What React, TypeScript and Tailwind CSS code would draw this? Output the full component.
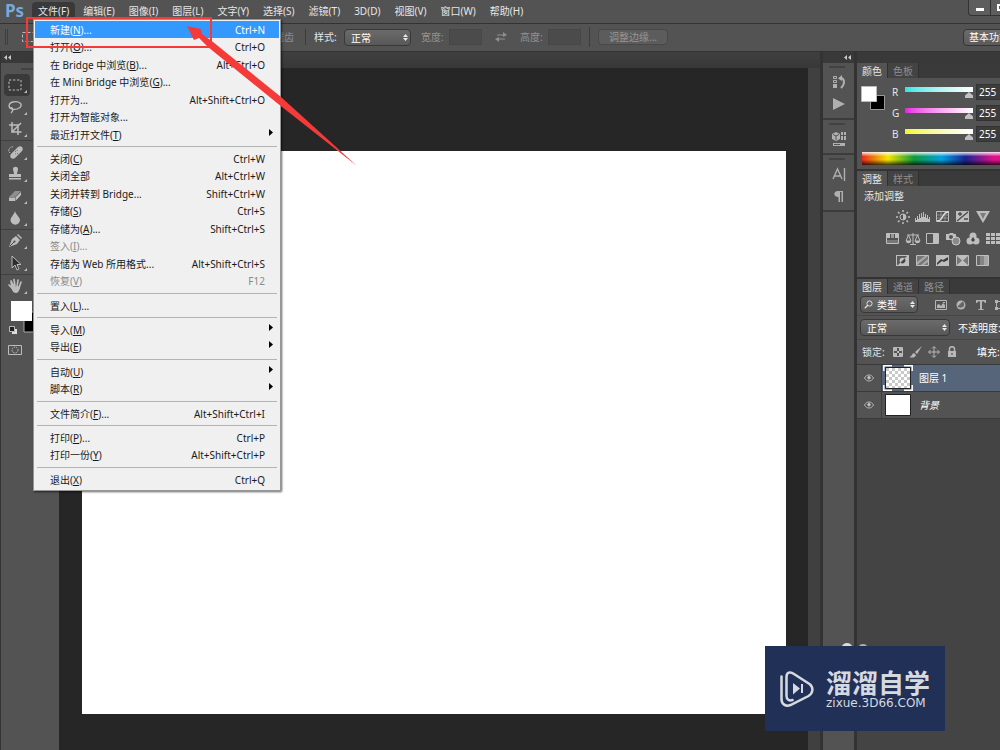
import React, { useState } from "react";

type MenuItem = {
  label: string;
  hotkey?: string;
  tail?: string;
  shortcut?: string;
  disabled?: boolean;
  submenu?: boolean;
};

const MENUS: [string, string][] = [
  ["文件", "F"],
  ["编辑", "E"],
  ["图像", "I"],
  ["图层", "L"],
  ["文字", "Y"],
  ["选择", "S"],
  ["滤镜", "T"],
  ["3D", "D"],
  ["视图", "V"],
  ["窗口", "W"],
  ["帮助", "H"],
];

const FILE_MENU: MenuItem[][] = [
  [
    { label: "新建", hotkey: "N", tail: "...", shortcut: "Ctrl+N" },
    { label: "打开", hotkey: "O", tail: "...", shortcut: "Ctrl+O" },
    { label: "在 Bridge 中浏览", hotkey: "B", tail: "...", shortcut: "Alt+Ctrl+O" },
    { label: "在 Mini Bridge 中浏览", hotkey: "G", tail: "..." },
    { label: "打开为...", shortcut: "Alt+Shift+Ctrl+O" },
    { label: "打开为智能对象..." },
    { label: "最近打开文件", hotkey: "T", submenu: true },
  ],
  [
    { label: "关闭", hotkey: "C", shortcut: "Ctrl+W" },
    { label: "关闭全部", shortcut: "Alt+Ctrl+W" },
    { label: "关闭并转到 Bridge...", shortcut: "Shift+Ctrl+W" },
    { label: "存储", hotkey: "S", shortcut: "Ctrl+S" },
    { label: "存储为", hotkey: "A", tail: "...", shortcut: "Shift+Ctrl+S" },
    { label: "签入", hotkey: "I", tail: "...", disabled: true },
    { label: "存储为 Web 所用格式...", shortcut: "Alt+Shift+Ctrl+S" },
    { label: "恢复", hotkey: "V", shortcut: "F12", disabled: true },
  ],
  [{ label: "置入", hotkey: "L", tail: "..." }],
  [
    { label: "导入", hotkey: "M", submenu: true },
    { label: "导出", hotkey: "E", submenu: true },
  ],
  [
    { label: "自动", hotkey: "U", submenu: true },
    { label: "脚本", hotkey: "R", submenu: true },
  ],
  [{ label: "文件简介", hotkey: "F", tail: "...", shortcut: "Alt+Shift+Ctrl+I" }],
  [
    { label: "打印", hotkey: "P", tail: "...", shortcut: "Ctrl+P" },
    { label: "打印一份", hotkey: "Y", shortcut: "Alt+Shift+Ctrl+P" },
  ],
  [{ label: "退出", hotkey: "X", shortcut: "Ctrl+Q" }],
];

export default function App() {
  return (
    <div className="relative flex h-screen flex-col overflow-hidden bg-[#535353] font-['Noto_Sans','Noto_Sans_CJK_SC',sans-serif] text-[10px] leading-4 text-[#e6e6e6]">
      <MenuBar />
      <OptionsBar />
      <div className="flex min-h-0 flex-1">
        <Toolbox />
        <Workspace />
        <IconDock />
        <Panels />
      </div>
      <FileMenu />
      <Annotation />
      <Watermark />
    </div>
  );
}

function MenuBar() {
  return (
    <header className="flex h-6 shrink-0 items-center border-b border-[#333] bg-[#535353] pb-px">
      <span className="w-8 pl-[5px] text-[17px] font-bold text-[#7aa9d6]">Ps</span>
      <nav className="flex flex-1 gap-0.5">
        {MENUS.map(([name, key], i) => (
          <button
            key={key}
            type="button"
            className={`h-[18px] rounded-sm px-1.5 whitespace-nowrap ${i === 0 ? "bg-[#393939]" : ""}`}
          >
            {name}({key})
          </button>
        ))}
      </nav>
      <div className="w-8 self-start overflow-hidden">
        <div className="flex w-24">
          <button
            type="button"
            aria-label="最小化"
            className="flex h-4 w-[23px] items-end justify-center rounded-bl border border-t-0 border-[#333] bg-[#5e5e5e] pb-1"
          >
            <span className="h-[3px] w-2 bg-white" />
          </button>
          <button
            type="button"
            aria-label="最大化"
            className="flex h-4 w-[23px] items-center border border-t-0 border-l-0 border-[#333] bg-[#5e5e5e] pl-1.5"
          >
            <span className="h-[7px] w-2 border-2 border-white" />
          </button>
        </div>
      </div>
    </header>
  );
}

function OptionsBar() {
  return (
    <div className="flex h-7 shrink-0 items-center border-b border-[#333] bg-[#535353] pb-px">
      <div className="flex w-[306px] items-center justify-between border-r border-[#3c3c3c] pr-[11px] pl-[5px]">
        <span className="flex items-center gap-3">
          <span className="h-4 w-[3px] border-x border-[#3e3e3e]" />
          <svg width="16" height="14" fill="none" stroke="#bbb" strokeDasharray="3 2">
            <rect x="2.5" y="2.5" width="11" height="9" />
          </svg>
        </span>
        <label className="flex items-center gap-1 text-[#8b8b8b]">
          <input type="checkbox" disabled className="h-2.5 w-2.5" />
          消除锯齿
        </label>
      </div>
      <label className="flex items-center gap-1.5 pl-2">
        <span className="w-6 whitespace-nowrap">样式:</span>
        <Select value="正常" options={["正常", "固定比例", "固定大小"]} className="w-[67px]" />
      </label>
      <label className="flex items-center gap-1 pl-2.5 text-[#929292]">
        <span className="w-6">宽度:</span>
        <input disabled className="h-4 w-[33px] border border-[#474747] bg-[#4b4b4b]" />
      </label>
      <button type="button" disabled aria-label="高度和宽度互换" className="mx-3 text-[#8f8f8f]">
        <svg width="14" height="12" fill="currentColor">
          <path d="M3 3.500h6V1l4 3-4 2V4.500H3zM11 8.500H5V11L1 8l4-2v1.500h6z" />
        </svg>
      </button>
      <label className="flex items-center gap-1 text-[#929292]">
        <span className="w-6">高度:</span>
        <input disabled className="h-4 w-[33px] border border-[#474747] bg-[#4b4b4b]" />
      </label>
      <span className="mx-2 h-5 w-px bg-[#3c3c3c]" />
      <button
        type="button"
        disabled
        className="h-4 w-[70px] rounded-sm border border-[#484848] bg-[#5c5c5c] leading-3 text-[#959595]"
      >
        调整边缘...
      </button>
      <div className="ml-auto w-[37px] overflow-hidden">
        <button
          type="button"
          className="h-[17px] w-20 rounded-sm border border-[#353535] bg-linear-to-b from-[#6c6c6c] to-[#5a5a5a] pl-[5px] text-left leading-3 text-white"
        >
          基本功能
        </button>
      </div>
    </div>
  );
}

function Select({
  value,
  options,
  className,
  label,
  search,
}: {
  value: string;
  options: string[];
  className: string;
  label?: string;
  search?: boolean;
}) {
  return (
    <span className={`relative shrink-0 ${className}`}>
      <select
        defaultValue={value}
        aria-label={label}
        className={`block h-[17px] w-full appearance-none rounded-sm border border-[#383838] bg-linear-to-b from-[#6b6b6b] to-[#585858] text-white ${search ? "pl-4" : "pl-1.5"}`}
      >
        {options.map((o) => (
          <option key={o}>{o}</option>
        ))}
      </select>
      <svg
        width="5"
        height="7"
        fill="#e8e8e8"
        className="pointer-events-none absolute top-[5px] right-[3px]"
      >
        <path d="M0 3 2.5 0 5 3zM0 4h5L2.5 7z" />
      </svg>
      {search ? (
        <svg
          width="9"
          height="9"
          fill="none"
          stroke="#ddd"
          className="pointer-events-none absolute top-1 left-1"
        >
          <circle cx="5.5" cy="3.5" r="2.6" />
          <path d="M3.7 5.3.8 8.2" strokeWidth="1.4" />
        </svg>
      ) : null}
    </span>
  );
}

const TOOLS: { name: string; icon: React.ReactNode }[][] = [
  [
    {
      name: "矩形选框工具",
      icon: <path d="M2 3h12v10H2z" fill="none" stroke="currentColor" strokeDasharray="2.4 1.6" />,
    },
    {
      name: "套索工具",
      icon: (
        <path
          d="M5 10C1 9 1 4 6 3s9 1 8 4-6 4-9 3c-2-1-1-2 0-1s1 3-1 5"
          fill="none"
          stroke="currentColor"
          strokeWidth="1.3"
        />
      ),
    },
    {
      name: "裁剪工具",
      icon: (
        <path
          d="M5 1v10h9.500M2 4h9v10M4.500 11.500 14 2"
          fill="none"
          stroke="currentColor"
          strokeWidth="1.500"
        />
      ),
    },
  ],
  [
    {
      name: "污点修复画笔工具",
      icon: (
        <>
          <path d="m4 10 7-7c1-1 3-1 4 0s1 3 0 4l-7 7c-1 1-3 1-4 0s-1-3 0-4z" />
          <path d="M3 9C0 6 3 2 7 3" fill="none" stroke="currentColor" strokeDasharray="1.500 1" />
          <path d="M8 7h.8v.8H8zM10 9h.8v.8H10zM9.800 6h.8v.8h-.8zM8 9.500h.8v.8H8z" fill="#444" />
        </>
      ),
    },
    {
      name: "仿制图章工具",
      icon: <path d="M6 3c0-3 5-3 5 0 0 2-1 3-1 5h4v3H2V8h5c0-2-1-3-1-5zM2 12h12v1.500H2z" />,
    },
    {
      name: "橡皮擦工具",
      icon: (
        <>
          <path d="m2 9 6-6h6L8 9z" fill="#8e8e8e" />
          <path d="M2 9.500h6v3.500H2zM8.500 9.300 14 4v3l-5.500 6z" />
        </>
      ),
    },
    { name: "模糊工具", icon: <path d="M8 1c1 4 5 6 5 9a4.600 4.600 0 0 1-9.500 0C3.500 7 7 5 8 1z" /> },
  ],
  [
    {
      name: "钢笔工具",
      icon: (
        <>
          <path d="m2 14 3-8 4-3 4 4-3 4zM10 2l1-1 4 4-1 1z" />
          <path d="m3 13 4-4" stroke="#444" />
          <circle cx="7.500" cy="8.500" r="1" fill="#444" />
        </>
      ),
    },
    {
      name: "路径选择工具",
      icon: <path d="M5 1v12l3-3 2 5 2-1-2-4.500h4z" fill="#2d2d2d" stroke="#bdbdbd" />,
    },
  ],
  [
    {
      name: "抓手工具",
      icon: (
        <>
          <path
            d="m2 7 3 3-1-7M4 3l3 6M7 1.500 8 8M11 2l-1 7M14 4l-2 6"
            stroke="currentColor"
            strokeWidth="1.700"
            strokeLinecap="round"
            fill="none"
          />
          <path d="m4 9 8-1 1 2c-1 3-2 5-4 5-3 0-4-3-5-6z" />
        </>
      ),
    },
  ],
];

function Toolbox() {
  const [active, setActive] = useState("矩形选框工具");
  return (
    <aside className="w-[59px] shrink-0 border-l border-[#333] bg-[#535353]">
      <div className="flex h-[11px] items-center bg-[#393939] pl-[3px]">
        <Collapse />
      </div>
      <div className="flex h-[11px] items-center pl-5">
        <span className="h-0.5 w-5 bg-[#424242]" />
      </div>
      {TOOLS.map((group, g) => (
        <div
          key={g}
          className="flex flex-col border-b border-[#404040] pl-[3px] last-of-type:border-b-0"
        >
          {group.map((tool) => (
            <button
              key={tool.name}
              type="button"
              aria-label={tool.name}
              onClick={() => setActive(tool.name)}
              className={`flex h-[22px] w-[26px] items-center justify-center rounded-sm text-[#bdbdbd] ${
                active === tool.name ? "bg-[#3a3a3a]" : ""
              }`}
            >
              <svg width="20" height="18" viewBox="0 -1 20 18" fill="currentColor">
                {tool.icon}
                <path d="M20 13v3h-3z" />
              </svg>
            </button>
          ))}
        </div>
      ))}
      <svg width="50" height="62" className="block">
        <path d="M23 15h20v20H23z" fill="#000" stroke="#aaa" />
        <path d="M10 4h21v20H10z" fill="#fff" />
        <path d="M11 32h5v5h-5z" fill="#ddd" />
        <path d="M8.500 29.500h5v5h-5z" fill="#222" stroke="#bbb" />
        <g fill="none" stroke="#bbb">
          <path d="M7.500 48.500h13v9h-13z" />
          <circle cx="14" cy="53" r="3" strokeDasharray="1.500 1" />
        </g>
      </svg>
    </aside>
  );
}

function Collapse() {
  return (
    <svg width="7" height="5" fill="#c8c8c8">
      <path d="M3 0v5L0 2.500zM7 0v5L4 2.500z" />
    </svg>
  );
}

function Workspace() {
  return (
    <main className="flex min-w-0 flex-1 flex-col">
      <div className="h-4 shrink-0 bg-linear-to-b from-[#3f3f3f] to-[#383838]" />
      <div className="flex flex-1 bg-[#262626]">
        <div className="flex-1 pt-[83px] pr-[22px] pb-9 pl-[23px]">
          <div className="h-full bg-white" />
        </div>
        <div className="w-3 bg-[#404040]" />
      </div>
    </main>
  );
}

const DOCK: { name: string; icon: React.ReactNode }[][] = [
  [
    {
      name: "历史记录",
      icon: (
        <>
          <path d="M2.500 2.500h3v2h-3zM2.500 6.500h3v2h-3z" fill="none" stroke="currentColor" />
          <path d="M2 10h4v4H2z" />
          <path d="M9 4c4-1 6 5 1 10" fill="none" stroke="currentColor" strokeWidth="2" />
          <path d="M7 4.500 11 1v6z" />
        </>
      ),
    },
    { name: "动作", icon: <path d="M2 2v12l12-6z" /> },
  ],
  [
    {
      name: "属性",
      icon: (
        <>
          <path d="m5 1 4 2v5l-4 2-4-2V3zM10 1h2v3h-2zM13 1h2v3h-2zM10 5h2v4h-2zM13 5h2v4h-2zM2 12h12v3H2z" />
          <path d="m2 3.500 3 1.500 3-1.500M5 5v4" fill="none" stroke="#555" />
          <path d="M3 13h6v1H3z" fill="#555" />
        </>
      ),
    },
  ],
  [
    {
      name: "字符",
      icon: (
        <path
          d="M2 13 6.500 3 11 13M3.500 10h6M13.500 2v13"
          fill="none"
          stroke="currentColor"
          strokeWidth="1.400"
        />
      ),
    },
    {
      name: "段落",
      icon: <path d="M12 3v11h-1.500V4H9v10H7.500V9C2 9 2 3 7 3z" />,
    },
  ],
];

function IconDock() {
  return (
    <aside className="flex w-[37px] shrink-0 flex-col border-x-[3px] border-[#333] bg-[#535353]">
      <div className="flex h-[11px] items-center justify-end bg-[#393939] pr-[3px]">
        <Collapse />
      </div>
      {DOCK.map((group, g) => (
        <div key={g} className="flex flex-col items-center border-b-2 border-[#3c3c3c] pb-[3px]">
          <span className="my-[3px] ml-1.5 h-0.5 w-4 self-start bg-[#424242]" />
          {group.map((d) => (
            <button
              key={d.name}
              type="button"
              aria-label={d.name}
              className="flex h-[22px] w-6 items-center justify-center text-[#b0b0b0]"
            >
              <svg width="16" height="16" fill="currentColor">
                {d.icon}
              </svg>
            </button>
          ))}
        </div>
      ))}
    </aside>
  );
}

function Tabs({ names }: { names: string[] }) {
  return (
    <div className="flex h-[15px] bg-[#3a3a3a]">
      {names.map((n, i) => (
        <button
          key={n}
          type="button"
          className={`h-[15px] border-r border-[#303030] px-[5px] leading-3 ${
            i === 0 ? "bg-[#535353] text-[#e6e6e6]" : "bg-[#434343] text-[#8f8f8f]"
          }`}
        >
          {n}
        </button>
      ))}
    </div>
  );
}

function Panels() {
  return (
    <aside className="w-[143px] shrink-0 overflow-hidden bg-[#444]">
      <div className="w-[240px]">
        <div className="h-[11px] bg-[#393939]" />
        <ColorPanel />
        <AdjustPanel />
        <LayersPanel />
      </div>
    </aside>
  );
}

const CHANNELS = [
  { key: "R", track: "[&::-webkit-slider-runnable-track]:from-[#25e6e6]" },
  { key: "G", track: "[&::-webkit-slider-runnable-track]:from-[#e620e0]" },
  { key: "B", track: "[&::-webkit-slider-runnable-track]:from-[#f5f520]" },
];

function ColorPanel() {
  return (
    <section className="border-b-2 border-[#333] bg-[#535353]">
      <Tabs names={["颜色", "色板"]} />
      <div className="flex h-[74px] pt-1.5 pl-1">
        <svg width="31" height="30" className="shrink-0">
          <path d="M9.500 11.500h14v14h-14z" fill="#000" stroke="#999" />
          <path d="M.5 2.500h15v15H.5z" fill="#fff" stroke="#bbb" />
        </svg>
        <div className="flex flex-col gap-[5px]">
          {CHANNELS.map((c) => (
            <label key={c.key} className="flex h-4 items-start">
              <span className="w-[13px]">{c.key}</span>
              <input
                type="range"
                min={0}
                max={255}
                defaultValue={255}
                className={`mt-[3px] h-[5px] w-[68px] appearance-none bg-transparent [&::-webkit-slider-runnable-track]:h-[5px] [&::-webkit-slider-runnable-track]:bg-linear-to-r [&::-webkit-slider-runnable-track]:to-white [&::-webkit-slider-thumb]:mt-[5px] [&::-webkit-slider-thumb]:h-1.5 [&::-webkit-slider-thumb]:w-2 [&::-webkit-slider-thumb]:appearance-none [&::-webkit-slider-thumb]:bg-[#c0c0c0] [&::-webkit-slider-thumb]:[clip-path:polygon(50%_0,100%_60%,100%_100%,0_100%,0_60%)] ${c.track}`}
              />
              <input
                type="text"
                aria-label={c.key}
                defaultValue="255"
                className="ml-[3px] h-4 w-8 border border-[#333] bg-[#3c3c3c] pl-0.5 text-white"
              />
            </label>
          ))}
        </div>
      </div>
      <div className="mb-1 ml-[5px] h-[13px]">
        <svg width="235" height="13">
          <defs>
            <linearGradient id="hue">
              <stop offset="0" stopColor="#e8291c" />
              <stop offset=".11" stopColor="#f3e500" />
              <stop offset=".22" stopColor="#109a3a" />
              <stop offset=".34" stopColor="#00a0e0" />
              <stop offset=".44" stopColor="#1a2390" />
              <stop offset=".56" stopColor="#e0108a" />
              <stop offset="1" stopColor="#e8291c" />
            </linearGradient>
            <linearGradient id="shade" x2="0" y2="1">
              <stop offset="0" stopColor="#fff" stopOpacity=".9" />
              <stop offset=".35" stopColor="#fff" stopOpacity="0" />
              <stop offset=".6" stopColor="#000" stopOpacity="0" />
              <stop offset="1" stopColor="#000" stopOpacity=".75" />
            </linearGradient>
          </defs>
          <path d="M0 0h235v13H0z" fill="url(#hue)" />
          <path d="M0 0h235v13H0z" fill="url(#shade)" />
        </svg>
      </div>
    </section>
  );
}

const frame = <path d="M1.500 2.500h12v10h-12z" fill="none" stroke="currentColor" />;

const ADJUSTMENTS: { name: string; icon: React.ReactNode }[][] = [
  [
    {
      name: "亮度/对比度",
      icon: (
        <>
          <circle cx="8" cy="8" r="3" fill="none" stroke="currentColor" />
          <path d="M8 5a3 3 0 0 1 0 6z" />
          <path
            d="M8 1v2M8 13v2M1 8h2M13 8h2M3 3l1.500 1.500M11.500 11.500 13 13M3 13l1.500-1.500M11.500 4.500 13 3"
            stroke="currentColor"
            strokeWidth="1.500"
          />
        </>
      ),
    },
    {
      name: "色阶",
      icon: <path d="M0 13v-4h1v2h1V7h1v3h1V5h1v4h1V4h1v4h1V3h1v5h1V5h1v4h1V6h1v4h1V8h1v5z" />,
    },
    {
      name: "曲线",
      icon: (
        <>
          {frame}
          <path d="M2 6h11M2 9h11M6 3v9M10 3v9" stroke="currentColor" strokeOpacity=".5" />
          <path d="M2 12C9 12 6 3 14 3" fill="none" stroke="#ddd" strokeWidth="1.500" />
        </>
      ),
    },
    {
      name: "曝光度",
      icon: (
        <>
          <path d="M1 2h13v11H1z" />
          <path d="m2 12 11-9M3 5h4M5 3v4M9 10h4" stroke="#4a4a4a" fill="none" strokeWidth="1.300" />
        </>
      ),
    },
    {
      name: "自然饱和度",
      icon: (
        <>
          <path d="M1 2h14L8 14z" />
          <path d="M5 4h6l-3 6z" fill="#7c7c7c" />
        </>
      ),
    },
  ],
  [
    {
      name: "色相/饱和度",
      icon: (
        <>
          {frame}
          <path d="M2 3h3v4H2z" />
          <path d="M6 3h3v4H6z" fill="#999" />
          <path d="M10 3h3v4h-3z" />
          <path d="M2 9h11v3H2z" fill="#777" />
        </>
      ),
    },
    {
      name: "色彩平衡",
      icon: (
        <>
          <path
            d="M8 2v11M2 4h12M3.500 4 1 10h5zM12.500 4 10 10h5zM5 13.500h6"
            fill="none"
            stroke="currentColor"
          />
          <path d="M1 10h5c0 3-5 3-5 0zM10 10h5c0 3-5 3-5 0z" />
        </>
      ),
    },
    {
      name: "黑白",
      icon: (
        <>
          {frame}
          <path d="M8 3h5v9H8z" />
        </>
      ),
    },
    {
      name: "照片滤镜",
      icon: (
        <>
          <path d="M1 3h3l1-1h3l1 1h2v6H1z" />
          <circle cx="6" cy="6" r="2" fill="#555" />
          <circle cx="11" cy="10" r="4" fill="#8a8a8a" stroke="#ccc" />
        </>
      ),
    },
    {
      name: "通道混合器",
      icon: (
        <>
          <circle cx="8" cy="5" r="3.500" />
          <circle cx="5" cy="10" r="3.500" />
          <circle cx="11" cy="10" r="3.500" />
          <path d="m8 6 2 3-2 2-2-2z" fill="#444" />
        </>
      ),
    },
    {
      name: "颜色查找",
      icon: (
        <>
          <path d="M1 2h14v11H1z" />
          <path d="M1 5.500h14M1 9.500h14M5.500 2v11M10.500 2v11" stroke="#555" />
        </>
      ),
    },
  ],
  [
    {
      name: "反相",
      icon: (
        <>
          <path d="M1 2h13v11H1z" />
          <path d="M2 3h10L3 12H2z" fill="#5a5a5a" />
          <circle cx="7.500" cy="7.500" r="2.800" fill="#c4c4c4" />
          <path d="m5.500 9.500 4-4a2.800 2.800 0 0 1-4 4z" fill="#444" />
        </>
      ),
    },
    {
      name: "色调分离",
      icon: (
        <>
          {frame}
          <path d="M2 3h11v9H2z" fill="#777" />
          <path d="m2 9 8-6h3L2 12zM6 12l7-6v3l-4 3z" fill="#aaa" />
        </>
      ),
    },
    {
      name: "阈值",
      icon: (
        <>
          <path d="M1 2h13v11H1z" />
          <path d="M2 10 6 6l2 1 5-3v3L9 9 7 8l-5 4z" fill="#3c3c3c" />
        </>
      ),
    },
    {
      name: "渐变映射",
      icon: (
        <>
          {frame}
          <path d="M2 3h11v9H2z" fill="#777" />
          <path d="M2 3h11L8 7.500 13 12H2l5-4.500z" />
        </>
      ),
    },
    {
      name: "可选颜色",
      icon: (
        <>
          {frame}
          <path d="M2 3h3v9H2z" fill="#666" />
          <path d="M5 3h4v9H5z" fill="#868686" />
          <path d="M9 3h4v9H9z" fill="#a6a6a6" />
        </>
      ),
    },
  ],
];

function AdjustPanel() {
  return (
    <section className="border-b-2 border-[#333] bg-[#535353]">
      <Tabs names={["调整", "样式"]} />
      <h2 className="pt-0.5 pl-[7px]">添加调整</h2>
      <div className="flex flex-col gap-1.5 pt-[5px] pb-2">
        {ADJUSTMENTS.map((row, r) => (
          <div key={r} className={`flex gap-1 ${r === 1 ? "pl-7" : "pl-[38px]"}`}>
            {row.map((a) => (
              <button key={a.name} type="button" aria-label={a.name} className="text-[#bebebe]">
                <svg width="16" height="16" fill="currentColor" className="block">
                  {a.icon}
                </svg>
              </button>
            ))}
          </div>
        ))}
      </div>
    </section>
  );
}

function LayersPanel() {
  return (
    <section>
      <div className="bg-[#535353]">
        <Tabs names={["图层", "通道", "路径"]} />
        <div className="flex h-[22px] items-center border-b border-[#474747] pl-[3px] text-[#b4b4b4]">
          <Select label="滤镜类型" value="类型" options={["类型", "名称"]} className="w-[58px]" search />
          <div className="flex gap-1 pl-[15px]">
            <FilterButton name="像素图层">
              <path d="M2.500 3.500h11v9h-11z" fill="none" stroke="currentColor" />
              <path d="M4 11V8l2-1 2 2 2-3 2 2v3zM10 5h2v1h-2z" />
            </FilterButton>
            <FilterButton name="调整图层">
              <circle cx="8" cy="8" r="4.500" />
              <path d="M4.500 9.500 9.500 4.500c2 1 2 4 1 5s-4 2-6 0z" fill="#666" />
            </FilterButton>
            <FilterButton name="文字图层">
              <path d="M3 3h10v3h-1l-1-1.500H9V12l2 .5v.5H5v-.5l2-.5V4.500H5L4 6H3z" />
            </FilterButton>
            <FilterButton name="形状图层">
              <path d="M3.500 4.500h9v7h-9z" fill="none" stroke="currentColor" />
              <path d="M2 3h3v3H2zM2 10h3v3H2z" />
            </FilterButton>
          </div>
        </div>
        <div className="flex h-6 items-center gap-2 border-b border-[#474747] pl-[3px]">
          <Select label="混合模式" value="正常" options={["正常", "溶解"]} className="w-[90px]" />
          <span className="text-white">不透明度:</span>
        </div>
        <div className="flex h-6 items-center pl-[5px] text-[#b8b8b8]">
          <span className="w-7 text-[#e6e6e6]">锁定:</span>
          <div className="flex flex-1 gap-0.5">
            <FilterButton name="锁定透明像素">
              <path d="M3.500 3.500h9v9h-9z" fill="none" stroke="currentColor" />
              <path d="M4 4h3v3H4zM9 4h3v3H9zM7 7h2v2H7zM4 9h3v3H4zM9 9h3v3H9z" />
            </FilterButton>
            <FilterButton name="锁定图像像素">
              <path d="M14 2 9 10 7 8zM6 9l2 2c-1 3-4 3-7 2 3 0 3-4 5-4z" />
            </FilterButton>
            <FilterButton name="锁定位置">
              <path
                d="M8 3v10M3 8h10M6 4.500l2-2 2 2M6 11.500l2 2 2-2M4.500 6l-2 2 2 2M11.500 6l2 2-2 2"
                fill="none"
                stroke="currentColor"
              />
            </FilterButton>
            <FilterButton name="锁定全部">
              <path d="M4 7h8v6H4z" />
              <path d="M5.500 7V5c0-3 5-3 5 0v2" fill="none" stroke="currentColor" strokeWidth="1.500" />
              <path d="M7.500 9h1v2h-1z" fill="#444" />
            </FilterButton>
            <span className="pl-[15px] text-white">填充:</span>
          </div>
        </div>
      </div>
      <ul className="border-t border-[#3a3a3a]">
        <Layer name="图层 1" selected />
        <Layer name="背景" />
      </ul>
    </section>
  );
}

function FilterButton({ name, children }: { name: string; children: React.ReactNode }) {
  return (
    <button type="button" aria-label={name}>
      <svg width="16" height="16" fill="currentColor" className="block">
        {children}
      </svg>
    </button>
  );
}

function Layer({ name, selected }: { name: string; selected?: boolean }) {
  return (
    <li className="flex h-[27px] items-center border-b border-[#3a3a3a] bg-[#535353]">
      <button
        type="button"
        aria-label={`显示 ${name}`}
        className="flex h-full w-[25px] items-center justify-center border-r border-[#404040]"
      >
        <svg width="10" height="8" fill="none" stroke="#b8b8b8">
          <path d="M.5 4C2.500 0 7.500 0 9.500 4 7.500 8 2.500 8 .5 4z" />
          <circle cx="5" cy="3.700" r="1.300" fill="#ccc" />
        </svg>
      </button>
      <div
        className={`flex h-full flex-1 items-center gap-1.5 pl-px text-white ${selected ? "bg-[#566579]" : ""}`}
      >
        <svg width="30" height="26">
          <defs>
            <pattern id="checker" width="6" height="6" patternUnits="userSpaceOnUse" x="3" y="3">
              <path d="M0 0h6v6H0z" fill="#fff" />
              <path d="M0 0h3v3H0zM3 3h3v3H3z" fill="#c9c9c9" />
            </pattern>
          </defs>
          <path
            d="M2.500 2.500h25v21h-25z"
            fill={selected ? "url(#checker)" : "#fff"}
            stroke="#222"
          />
          {selected ? (
            <path
              d="M.8 6V.8H9M21 .8h8.200V6M29.200 20v5.200H21M9 25.200H.8V20"
              fill="none"
              stroke="#fff"
              strokeWidth="1.500"
            />
          ) : null}
        </svg>
        <span className={selected ? "" : "italic"}>{name}</span>
      </div>
    </li>
  );
}

function FileMenu() {
  return (
    <div className="absolute top-[19px] left-[33px] w-[248px] border border-[#979797] bg-[#f0f0f0] px-px pt-px pb-0.5 text-[#1a1a1a] shadow-[1px_1px_2px_rgba(0,0,0,0.6)]">
      {FILE_MENU.map((group, g) => (
        <React.Fragment key={g}>
          {g > 0 ? <hr className="mx-0.5 my-[3px] border-[#b4b4b4]" /> : null}
          <ul>
            {group.map((item, i) => (
              <li key={item.label} className="odd:h-[17px] even:h-[18px]">
                <button
                  type="button"
                  disabled={item.disabled}
                  className={`flex h-full w-full items-center justify-between pr-3.5 pl-[15px] ${
                    g === 0 && i === 0 ? "bg-[#3399ff] text-white" : ""
                  } ${item.disabled ? "text-[#8a8a8a]" : ""}`}
                >
                  <span>
                    {item.label}
                    {item.hotkey ? (
                      <>
                        (<u>{item.hotkey}</u>)
                      </>
                    ) : null}
                    {item.tail}
                  </span>
                  {item.shortcut ? <span>{item.shortcut}</span> : null}
                  {item.submenu ? (
                    <svg width="4" height="12" className="-mr-2">
                      <path d="M0 0v7l4-3.500z" />
                    </svg>
                  ) : null}
                </button>
              </li>
            ))}
          </ul>
        </React.Fragment>
      ))}
    </div>
  );
}

function Annotation() {
  return (
    <svg
      width="360"
      height="170"
      className="pointer-events-none absolute top-0 left-0"
      fill="#f53a3a"
    >
      <path d="M27 18h184v29H27z" fill="none" stroke="#f53a3a" strokeWidth="2" />
      <path d="m187 26 14 3 1 5 11 8 68 55 76 69-80-63-69-56-9-9-5 2z" />
    </svg>
  );
}

function Watermark() {
  return (
    <div className="absolute right-[55px] bottom-[19px] w-[180px]">
      <svg width="32" height="3" fill="#d9dde3" className="ml-[76px] block">
        <ellipse cx="6" cy="4" rx="5" ry="4" />
        <ellipse cx="22" cy="4" rx="4" ry="3" fillOpacity=".7" />
      </svg>
      <div className="flex h-[85px] items-center gap-3 bg-[#213056] pl-[15px] text-[#d5d9e0]">
        <svg
          width="34"
          height="36"
          fill="none"
          stroke="currentColor"
          strokeWidth="2.500"
          strokeLinecap="round"
          className="shrink-0"
        >
          <path d="M1.500 5.500V28c0 5 4 8 9 6l18-9c5-3 5-9 1-12L14 3C10 0 6.500 1.500 6.500 6v19c0 4 3 5 6 4" />
          <path d="m13 12 7 5.500-7 6zM21 13h2v9h-2z" fill="currentColor" stroke="none" />
        </svg>
        <div>
          <p className="text-[26px] leading-7 font-bold">溜溜自学</p>
          <p className="font-['DejaVu_Sans',sans-serif] text-[12px] leading-3">zixue.3D66.COM</p>
        </div>
      </div>
    </div>
  );
}
